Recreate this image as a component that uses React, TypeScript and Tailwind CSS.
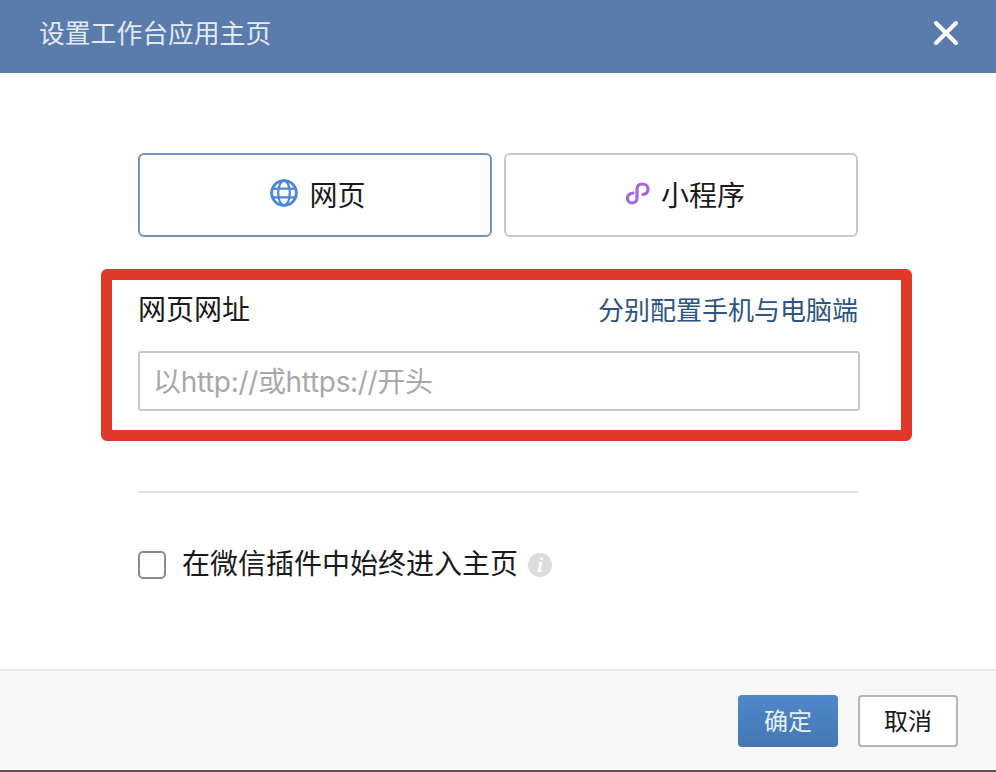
import React from "react";

const GlobeIcon = () => (
  <svg className="mb-[4px]" width="28" height="28" viewBox="0 0 28 28" fill="none" stroke="#4a86d8" strokeWidth="2.8">
    <circle cx="14" cy="14" r="12.4" />
    <ellipse cx="14" cy="14" rx="5.8" ry="12.4" strokeWidth="2.2" />
    <path d="M3 9.6h22M3 18.4h22" strokeWidth="2.2" />
  </svg>
);

const MiniProgramIcon = () => (
  <svg className="mb-[4px]" width="28" height="28" viewBox="12 9 28 28" fill="none" stroke="#a268dc" strokeWidth="3.2" strokeLinecap="round">
    <path d="M21 23C17.500 23.500 15.500 25.500 15.500 28.500C15.500 31 17.500 33 20 33C22.800 33 25 31 25 28V19C25 16 27 14 30.500 14C33.500 14 36 16 36 19C36 22 34 24 31 24.500" />
  </svg>
);

const App: React.FC = () => {
  return (
    <div className="w-[996px] h-[772px] flex flex-col bg-white overflow-hidden font-['Liberation_Sans','Noto_Sans_CJK_SC',sans-serif] text-[#1a1a1a]">
      {/* Header */}
      <div className="h-[73px] shrink-0 bg-[#5a7cad] flex items-center justify-between pl-[39px] pr-[37px]">
        <span className="mb-[4px] text-[25.800px] text-[#e3e9f2] leading-none">设置工作台应用主页</span>
        <svg className="mb-[7px]" width="26" height="26" viewBox="0 0 26 26" stroke="#ffffff" strokeWidth="4" strokeLinecap="round">
          <path d="M3 3l20 20M23 3L3 23" />
        </svg>
      </div>

      {/* Body */}
      <div className="flex-1 flex flex-col pl-[138px] pr-[138px] pt-[80px]">
        <div className="flex gap-[12px]">
          <button className="w-[354px] h-[84px] flex items-center justify-center gap-[11px] pl-[6px] rounded-[6px] border-2 border-[#7393b7] text-[28px] bg-white">
            <GlobeIcon />
            <span className="mt-[4px]">网页</span>
          </button>
          <button className="w-[354px] h-[84px] flex items-center justify-center gap-[9px] pl-[7px] rounded-[6px] border-2 border-[#c8c8c8] text-[28px] bg-white">
            <MiniProgramIcon />
            <span className="mt-[4px]">小程序</span>
          </button>
        </div>

        {/* URL field, with the red annotation frame over it */}
        <div className="relative mt-[54px]">
          <div className="flex items-center justify-between h-[40px]">
            <span className="text-[28px] leading-none">网页网址</span>
            <span className="text-[26px] leading-none text-[#2b5580]">分别配置手机与电脑端</span>
          </div>
          <input
            readOnly
            placeholder="以http://或https://开头"
            className="mt-[20px] w-[722px] h-[60px] block rounded-[3px] border-2 border-[#c8c8c8] bg-white pl-[13px] pr-[14px] pt-[1px] font-['Inter','Noto_Sans_CJK_SC',sans-serif] text-[28px] tracking-[-0.33px] placeholder:text-[#a8a8a8] outline-none"
          />
          <div className="absolute left-[-37px] top-[-22px] w-[811px] h-[172px] rounded-[6px] border-[11px] border-[#e0392b]" />
        </div>

        <div className="mt-[80px] h-[2px] bg-[#dedede]" />

        <div className="mt-[58px] flex items-center">
          <div className="w-[28px] h-[28px] rounded-[5px] border-2 border-[#8a8a8a] bg-white" />
          <span className="ml-[16px] text-[28px] leading-none">在微信插件中始终进入主页</span>
          <span className="ml-[10px] w-[24px] h-[24px] rounded-full bg-[#dcdcdc] flex items-center justify-center text-white text-[22px] font-bold italic font-['Liberation_Serif',serif] leading-none">
            i
          </span>
        </div>
      </div>

      {/* Footer */}
      <div className="h-[103px] shrink-0 pt-[1px] bg-[#f7f7f7] border-t-2 border-[#e6e6e6] border-b-2 border-b-[#555555] flex items-center justify-end gap-[20px] pr-[38px]">
        <button className="w-[100px] h-[52px] pt-[1px] rounded-[4px] bg-gradient-to-b from-[#4f88cc] to-[#4577b3] text-[#e8f0f9] text-[24px]">
          确定
        </button>
        <button className="w-[100px] h-[52px] pt-[1px] rounded-[4px] border-2 border-[#b4b4b4] bg-white text-[24px]">
          取消
        </button>
      </div>
    </div>
  );
};

export default App;
